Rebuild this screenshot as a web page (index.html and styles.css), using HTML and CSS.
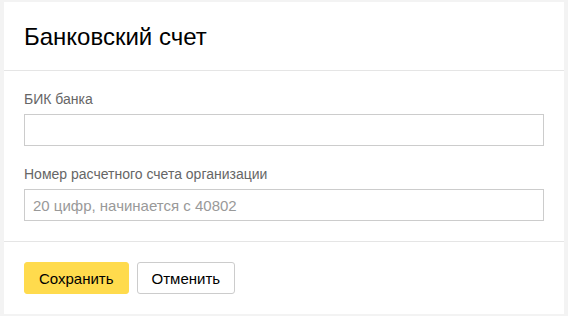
FILE: index.html
```html
<!DOCTYPE html>
<html lang="ru">
<head>
  <meta charset="UTF-8">
  <meta name="viewport" content="width=device-width, initial-scale=1.0">
  <title>Банковский счет</title>
  <link rel="stylesheet" href="styles.css">
</head>
<body>
  <div class="card">
    <div class="card-header">
      <h1>Банковский счет</h1>
    </div>
    <form class="card-body" id="bankForm">
      <label class="field-label" for="bik">БИК банка</label>
      <input class="field-input" type="text" id="bik" name="bik">

      <label class="field-label" for="account">Номер расчетного счета организации</label>
      <input class="field-input" type="text" id="account" name="account" placeholder="20 цифр, начинается с 40802">
    </form>
    <div class="card-footer">
      <button type="submit" form="bankForm" class="btn btn-primary">Сохранить</button>
      <button type="button" class="btn">Отменить</button>
    </div>
  </div>
</body>
</html>
```

FILE: styles.css
```css
body {
  font-family: "Liberation Sans", Arial, sans-serif;
  margin: 0;
  padding: 2px 4px;
  background-color: #f3f3f3;
}
.card {
  width: 560px;
  height: 312px;
  background: #fff;
  box-sizing: border-box;
}
.card-header {
  height: 69px;
  padding: 21px 20px 0;
  box-sizing: border-box;
  border-bottom: 1px solid #e5e5e5;
}
h1 {
  margin: 0;
  font-size: 24px;
  line-height: 28px;
  font-weight: normal;
  color: #000;
}
.card-body {
  display: flex;
  flex-direction: column;
  padding: 19px 20px 20px;
  border-bottom: 1px solid #e5e5e5;
}
.field-label {
  font-size: 14px;
  line-height: 18px;
  color: #666;
  margin-bottom: 6px;
}
.field-input {
  height: 32px;
  box-sizing: border-box;
  padding: 0 8px;
  border: 1px solid #ccc;
  border-radius: 0;
  font-family: inherit;
  font-size: 15px;
  color: #000;
  outline: none;
}
.field-input + .field-label {
  margin-top: 19px;
}
.field-input::placeholder {
  color: #999;
}
.card-footer {
  display: flex;
  gap: 8px;
  padding: 20px;
}
.btn {
  height: 32px;
  padding: 0 14px;
  border: 1px solid #ccc;
  border-radius: 3px;
  background: #fff;
  font-family: inherit;
  font-size: 15px;
  color: #000;
  cursor: pointer;
}
.btn-primary {
  background-color: #ffdb4d;
  border-color: #ffdb4d;
}
```
